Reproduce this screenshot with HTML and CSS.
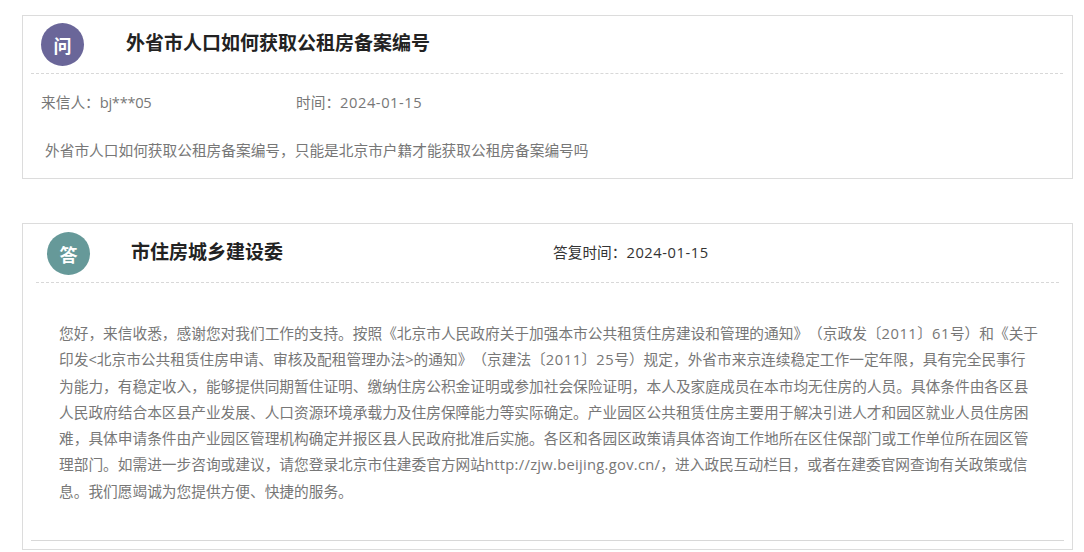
FILE: index.html
```html
<!DOCTYPE html>
<html lang="zh-CN">
<head>
<meta charset="utf-8">
<title>外省市人口如何获取公租房备案编号</title>
<link rel="stylesheet" href="styles.css">
</head>
<body>
<main class="page">
  <section class="card card-q">
    <header class="head head-q">
      <span class="badge badge-q">问</span>
      <h1 class="title">外省市人口如何获取公租房备案编号</h1>
    </header>
    <div class="meta">
      <span class="sender">来信人：<span class="user">bj***05</span></span>
      <span>时间：<span class="num">2024-01-15</span></span>
    </div>
    <p class="question">外省市人口如何获取公租房备案编号，只能是北京市户籍才能获取公租房备案编号吗</p>
  </section>
  <section class="card card-a">
    <header class="head head-a">
      <span class="badge badge-a">答</span>
      <h2 class="title title-a">市住房城乡建设委</h2>
      <span class="reply-time">答复时间：<span class="num">2024-01-15</span></span>
    </header>
    <p class="answer">您好，来信收悉，感谢您对我们工作的支持。按照《北京市人民政府关于加强本市公共租赁住房建设和管理的通知》（京政发〔<span class="num">2011</span>〕<span class="num">61</span>号）和《关于印发&lt;北京市公共租赁住房申请、审核及配租管理办法&gt;的通知》（京建法〔<span class="num">2011</span>〕<span class="num">25</span>号）规定，外省市来京连续稳定工作一定年限，具有完全民事行为能力，有稳定收入，能够提供同期暂住证明、缴纳住房公积金证明或参加社会保险证明，本人及家庭成员在本市均无住房的人员。具体条件由各区县人民政府结合本区县产业发展、人口资源环境承载力及住房保障能力等实际确定。产业园区公共租赁住房主要用于解决引进人才和园区就业人员住房困难，具体申请条件由产业园区管理机构确定并报区县人民政府批准后实施。各区和各园区政策请具体咨询工作地所在区住保部门或工作单位所在园区管理部门。如需进一步咨询或建议，请您登录北京市住建委官方网站<span class="url">http://zjw.beijing.gov.cn/</span>，进入政民互动栏目，或者在建委官网查询有关政策或信息。我们愿竭诚为您提供方便、快捷的服务。</p>
    <div class="rule"></div>
  </section>
</main>
</body>
</html>
```
FILE: styles.css
```css
html, body { margin: 0; padding: 0; background: #fff; overflow: hidden; }
body { font-family: "Open Sans", "Noto Sans CJK SC", sans-serif; font-size: 14.7px; color: #777; text-spacing-trim: space-all; font-kerning: none; }
.page { padding: 15px 11px 0 22px; }
.card { border: 1px solid #dcdcdc; box-sizing: border-box; }
.card-q { height: 164px; }
.card-a { height: 327px; margin-top: 44px; }
.num { letter-spacing: 0.55px; }
.url { letter-spacing: 0.3px; }
.user { letter-spacing: -0.3px; }
.head { display: flex; align-items: flex-start; border-bottom: 1px dashed #d8d8d8; height: 50px; }
.head-q { margin: 7px 9px 0 8px; padding-left: 10px; }
.head-a { margin: 8px 13px 0 13px; padding-left: 11px; }
.badge { width: 43px; height: 43px; border-radius: 50%; color: #fff; font-size: 18px; font-weight: 700; display: flex; align-items: center; justify-content: center; flex: none; }
.badge-q { background: #6a6699; }
.badge-a { background: #669999; }
.title { margin: 0 0 0 42px; font-size: 19px; font-weight: 700; color: #222; line-height: 41px; }
.title-a { margin-left: 41px; }
.reply-time { color: #333; margin-left: 270px; line-height: 41px; }
.meta { display: flex; padding: 18px 0 0 18px; line-height: 20px; }
.sender { width: 255px; }
.question { margin: 28px 0 0 22px; line-height: 20px; }
.answer { margin: 37px 33px 0 36px; line-height: 26.3px; }
.rule { border-top: 1px solid #d8d8d8; margin: 36px 8px 0 8px; }
```
